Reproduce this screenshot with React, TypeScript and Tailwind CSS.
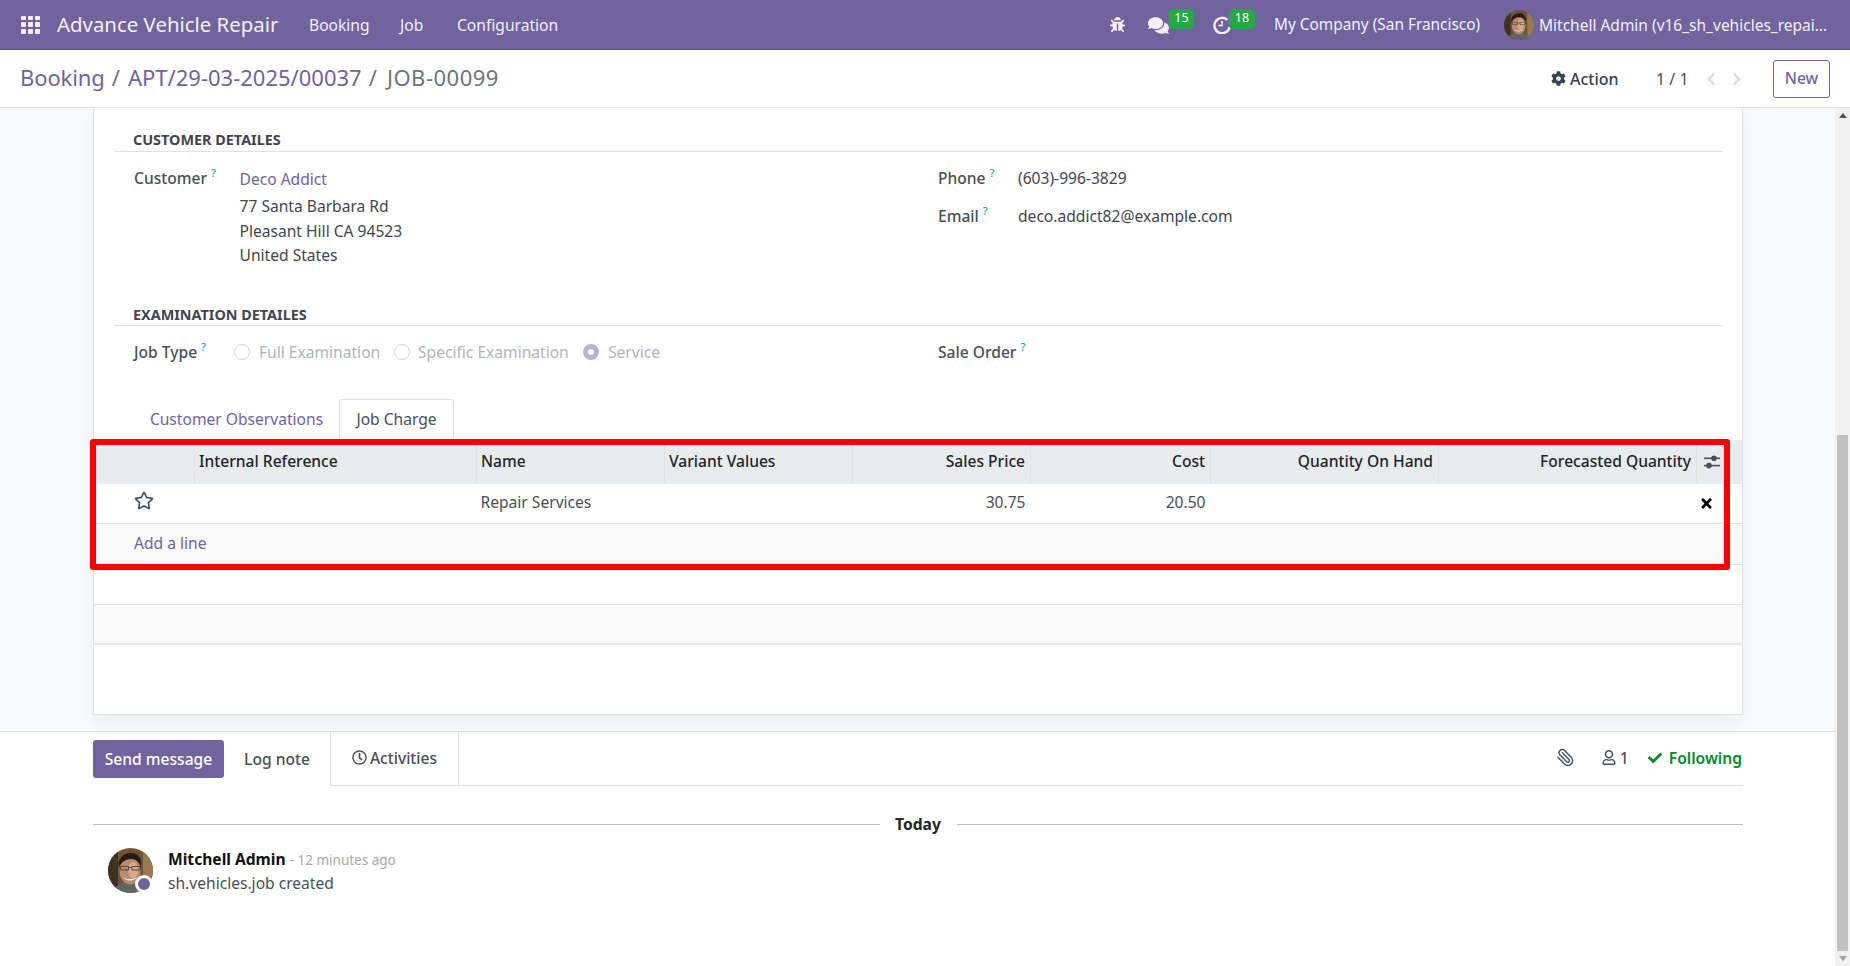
import React from "react";
import { Paperclip } from "lucide-react";
import { FaBug, FaComments, FaCog, FaChevronLeft, FaChevronRight, FaRegStar, FaTimes, FaRegClock, FaRegUser, FaCheck } from "react-icons/fa";

function Face() {
  return (
    <svg viewBox="0 0 45 45" className="w-full h-full rounded-full block">
      <rect width="45" height="45" fill="#6e5233" />
      <rect x="0" y="0" width="10" height="45" fill="#3f3120" />
      <rect x="35" y="0" width="10" height="45" fill="#9a7a50" />
      <path d="M5 45c1-8 9-11 17-11s16 3 18 11z" fill="#5d6664" />
      <ellipse cx="22" cy="23" rx="10.5" ry="13.5" fill="#b98a6c" />
      <ellipse cx="25" cy="22" rx="5" ry="8" fill="#d4a98d" />
      <path d="M11 19c-2-10 6-14 12-14s11 4 10 13c-2-4-5-7-10-7s-10 3-12 8z" fill="#241b16" />
      <path d="M12 18.500h8.500v3.500h-7.500zM24 18.500h8.500l-1 3.500H24z" fill="none" stroke="#2a2a2a" strokeWidth="0.7" />
      <path d="M20.500 19.500H24" stroke="#2a2a2a" strokeWidth="0.7" />
      <path d="M15 29c3 3 10 3 14 0-2 4.500-12 4.500-14 0z" fill="#fff" />
    </svg>
  );
}

function Help() {
  return <sup className="text-[#17a2b8] text-[11px] ml-[4px] top-[-7px]">?</sup>;
}

const headers: [string, string][] = [
  ["", "text-left"],
  ["Internal Reference", "text-left"],
  ["Name", "text-left"],
  ["Variant Values", "text-left"],
  ["Sales Price", "text-right"],
  ["Cost", "text-right"],
  ["Quantity On Hand", "text-right"],
  ["Forecasted Quantity", "text-right"],
];

export default function App() {
  return (
    <div className="h-[966px] w-[1850px] overflow-hidden flex flex-col bg-white text-[#495057] text-[15.6px] leading-[20px] font-['Noto_Sans',sans-serif]">
      <header className="h-[50px] shrink-0 bg-[#71639e] border-b border-[#5f5386] flex items-center text-[#f3f1f7]">
        <div className="ml-[21px] grid grid-cols-3 gap-[2px] w-[19px] h-[18px]">
          {Array.from({ length: 9 }).map((_, i) => (
            <span key={i} className="bg-[#f3f1f7] rounded-[1px]" />
          ))}
        </div>
        <span className="ml-[17px] w-[252px] text-[20.4px] pb-[1px]">Advance Vehicle Repair</span>
        <span className="w-[91px]">Booking</span>
        <span className="w-[57px]">Job</span>
        <span className="w-[120px]">Configuration</span>
        <div className="flex-1" />
        <FaBug className="w-[15px] h-[15px] mr-[23px]" />
        <div className="flex w-[46px] mr-[19px] self-start h-full">
          <FaComments className="w-[21px] h-[19px] mt-[16px]" />
          <span className="h-[20px] w-[25px] mt-[9px] bg-[#28a745] rounded-[4px] text-[12.5px] text-center leading-[17px] text-white">15</span>
        </div>
        <div className="flex w-[61px] self-start h-full">
          <svg viewBox="0 0 18 18" className="w-[18px] h-[18px] mt-[16px]" fill="none" stroke="#f3f1f7" strokeWidth="2.4">
            <path d="M14.500 4a7.700 7.700 0 1 0 2.200 7" />
            <path d="M9 5v4.500H5.500" strokeWidth="1.600" />
          </svg>
          <span className="h-[20px] w-[26px] -ml-[2px] mt-[9px] bg-[#28a745] rounded-[4px] text-[12.5px] text-center leading-[17px] text-white">18</span>
        </div>
        <span className="w-[230px] whitespace-nowrap text-[15.4px]">My Company (San Francisco)</span>
        <div className="w-[30px] h-[30px] shrink-0"><Face /></div>
        <span className="ml-[5px] mr-[13px] w-[298px] whitespace-nowrap overflow-hidden text-[15.5px]">Mitchell Admin (v16_sh_vehicles_repai…</span>
      </header>

      <div className="h-[58px] shrink-0 border-b border-[#dee2e6] flex items-center">
        <div className="ml-[20px] flex items-center text-[22px] text-[#71639e] pb-[4px]">
          <span className="tracking-[-0.1px]">Booking</span>
          <span className="ml-[7px] mr-[8px] text-[#6c757d]">/</span>
          <span>APT/29-03-2025/00037</span>
          <span className="ml-[7px] mr-[10px] text-[#6c757d]">/</span>
          <span className="text-[#6c757d] tracking-[0.5px]">JOB-00099</span>
        </div>
        <div className="flex-1" />
        <FaCog className="w-[15px] h-[15px] text-[#374151]" />
        <span className="ml-[4px] w-[88px] font-medium text-[16px] text-[#374151]">Action</span>
        <span className="w-[47px] text-[16px] -ml-[2px] mr-[2px]">1 / 1</span>
        <FaChevronLeft className="w-[12px] h-[14px] text-[#d5d8dc]" />
        <FaChevronRight className="ml-[14px] w-[12px] h-[14px] text-[#d5d8dc]" />
        <button className="ml-[30px] mr-[20px] w-[57px] h-[38px] pb-[2px] border border-[#71639e] rounded-[3px] text-[#71639e] font-medium">New</button>
      </div>

      <div className="flex-1 flex min-h-0">
        <main className="w-[1835px] flex flex-col">
          <div className="bg-[#f9fafb] pl-[93px] pr-[92px] pb-[15px] h-[623px]">
            <section className="h-[607px] bg-white border-x border-b border-[#dee2e6] shadow-[0_8px_16px_rgba(0,0,0,0.05)]">
              <div className="pl-[20px] pr-[19px]">
                <h3 className="pt-[22px] h-[44px] border-b border-[#dee2e6] pl-[19px] text-[14.4px] font-bold text-[#3f4650]">CUSTOMER DETAILES</h3>
                <div className="grid grid-cols-[824px_1fr] pt-[16px] h-[141px]">
                  <div className="pl-[20px] flex">
                    <div className="w-[105.500px] font-medium"><span>Customer</span><Help /></div>
                    <div className="flex flex-col">
                      <span className="h-[28px] text-[#71639e] pt-[1px]">Deco Addict</span>
                      <span className="h-[25px] text-[#3f4650]">77 Santa Barbara Rd</span>
                      <span className="h-[24px] text-[#3f4650]">Pleasant Hill CA 94523</span>
                      <span className="text-[#3f4650]">United States</span>
                    </div>
                  </div>
                  <div className="flex flex-col">
                    <div className="flex h-[38px]"><div className="w-[80px] font-medium">Phone<Help /></div><span className="text-[#3f4650]">(603)-996-3829</span></div>
                    <div className="flex"><div className="w-[80px] font-medium">Email<Help /></div><span className="text-[#3f4650]">deco.addict82@example.com</span></div>
                  </div>
                </div>
                <h3 className="pt-[12px] h-[33px] border-b border-[#dee2e6] pl-[19px] text-[14.4px] font-bold text-[#3f4650]">EXAMINATION DETAILES</h3>
                <div className="grid grid-cols-[824px_1fr] pt-[16px] h-[73px]">
                  <div className="pl-[20px] flex items-start">
                    <div className="w-[100px] font-medium"><span>Job Type</span><Help /></div>
                    <span className="w-[16px] h-[16px] mt-[2px] rounded-full border border-[#ced4da] bg-white" />
                    <span className="ml-[9px] w-[135px] text-[#adb5bd]">Full Examination</span>
                    <span className="w-[16px] h-[16px] mt-[2px] rounded-full border border-[#ced4da] bg-white" />
                    <span className="ml-[8px] w-[165px] text-[#adb5bd]">Specific Examination</span>
                    <span className="w-[16px] h-[16px] mt-[2px] rounded-full border-[5px] border-[#b9b1cf] bg-white" />
                    <span className="ml-[9px] text-[#adb5bd]">Service</span>
                  </div>
                  <div className="font-medium">Sale Order<Help /></div>
                </div>
              </div>

              <nav className="h-[41px] flex pl-[40px] items-stretch">
                <span className="w-[205px] flex items-center justify-center text-[#71639e] pb-[2px]">Customer Observations</span>
                <span className="w-[115px] flex items-center justify-center bg-white border-x border-t border-[#dee2e6] rounded-t-[3px] pb-[2px]">Job Charge</span>
              </nav>

              <div className="relative">
                <table className="w-full table-fixed border-collapse">
                  <colgroup>
                    <col className="w-[100px]" />
                    <col className="w-[282px]" />
                    <col className="w-[188px]" />
                    <col className="w-[188px]" />
                    <col className="w-[178px]" />
                    <col className="w-[180px]" />
                    <col className="w-[228px]" />
                    <col className="w-[258px]" />
                    <col className="w-[46px]" />
                  </colgroup>
                  <thead>
                    <tr className="h-[44px] bg-[#e9ecef] text-[#212529]">
                      {headers.map(([h, a], i) => (
                        <th key={i} className={`${a} border-r border-[#dee2e6] px-[4.500px] pb-[2px] font-medium`}>{h}</th>
                      ))}
                      <th className="pl-[7px]">
                        <svg viewBox="0 0 16 16" className="w-[16px] h-[16px]" fill="#495057">
                          <rect x="0" y="3.500" width="16" height="1.600" />
                          <rect x="0" y="10.800" width="16" height="1.600" />
                          <circle cx="10" cy="4.300" r="2.800" />
                          <circle cx="5" cy="11.600" r="2.800" />
                        </svg>
                      </th>
                    </tr>
                  </thead>
                  <tbody>
                    <tr className="h-[39px] border-b border-[#dee2e6]">
                      <td className="pl-[40px]"><FaRegStar className="w-[20px] h-[19px] -mt-[6px] text-[#495057]" /></td>
                      <td></td>
                      <td className="px-[4.500px] pb-[2px]">Repair Services</td>
                      <td></td>
                      <td className="px-[4.500px] pb-[2px] text-right">30.75</td>
                      <td className="px-[4.500px] pb-[2px] text-right">20.50</td>
                      <td></td>
                      <td></td>
                      <td className="pl-[4px]"><FaTimes className="w-[13px] h-[15px] text-black" /></td>
                    </tr>
                    <tr className="h-[41px] bg-[#fafafa] border-b border-[#dee2e6]">
                      <td colSpan={9} className="pl-[40px] pb-[2px] text-[#71639e]">Add a line</td>
                    </tr>
                    <tr className="h-[40px] border-b border-[#dee2e6]"><td colSpan={9}></td></tr>
                    <tr className="h-[40px] bg-[#fafafa] border-b-2 border-[#e4e7eb]"><td colSpan={9}></td></tr>
                  </tbody>
                </table>
                <div className="absolute left-[-4px] top-[-1px] w-[1640px] h-[131px] border-[6px] border-[#ff0000] rounded-[3px]" />
              </div>
            </section>
          </div>

          <div className="flex-1 border-t border-[#dee2e6] bg-white">
            <div className="h-[54px] flex pl-[93px] pr-[92px]">
              <button className="w-[131px] h-[38px] mt-[8px] pb-[1px] bg-[#71639e] text-white rounded-[3px] font-medium">Send message</button>
              <span className="w-[106px] flex items-center justify-center font-medium pb-[1px]">Log note</span>
              <span className="w-[129px] flex items-center justify-center border-x border-b border-[#dee2e6] font-medium pb-[2px]">
                <FaRegClock className="w-[15px] h-[15px] mr-[3px]" />Activities
              </span>
              <div className="flex-1 flex items-center justify-end border-b border-[#dee2e6] pb-[2px]">
                <Paperclip className="w-[19px] h-[19px] mr-[27px] -scale-x-100" strokeWidth={1.8} />
                <FaRegUser className="w-[14px] h-[15px]" />
                <span className="ml-[4px] mr-[19px] font-medium">1</span>
                <FaCheck className="w-[14px] h-[14px] text-[#008a2e]" />
                <span className="ml-[7px] mr-[1px] font-semibold text-[#008a2e]">Following</span>
              </div>
            </div>
            <div className="pl-[93px] pr-[92px] mt-[28px] flex items-center">
              <div className="flex-1 h-[1px] bg-[#bfbfbf]" />
              <span className="w-[77px] text-center font-bold text-[#212529] pb-[1px]">Today</span>
              <div className="flex-1 h-[1px] bg-[#bfbfbf]" />
            </div>
            <div className="pl-[108px] mt-[13px] flex">
              <div className="relative w-[45px] h-[45px]">
                <Face />
                <span className="absolute left-[27px] top-[27px] w-[18px] h-[18px] rounded-full bg-[#71639e] border-[3px] border-white" />
              </div>
              <div className="ml-[15px]">
                <div className="pt-[1px]"><span className="font-bold text-[#111]">Mitchell Admin</span><span className="text-[13.500px] text-[#a8a8a8] ml-[4px]">- 12 minutes ago</span></div>
                <div className="mt-[3px]">sh.vehicles.job created</div>
              </div>
            </div>
          </div>
        </main>

        <aside className="w-[15px] bg-[#f1f1f1] flex flex-col">
          <div className="h-[15px] flex items-center justify-center">
            <svg viewBox="0 0 8 5" className="w-[8px] h-[5px]"><path d="M4 0l4 5H0z" fill="#505050" /></svg>
          </div>
          <div className="h-[312px]" />
          <div className="flex-1 mx-[2px] bg-[#c1c1c1]" />
          <div className="h-[15px] flex items-center justify-center">
            <svg viewBox="0 0 8 5" className="w-[8px] h-[5px]"><path d="M4 5l4-5H0z" fill="#a3a3a3" /></svg>
          </div>
        </aside>
      </div>
    </div>
  );
}
